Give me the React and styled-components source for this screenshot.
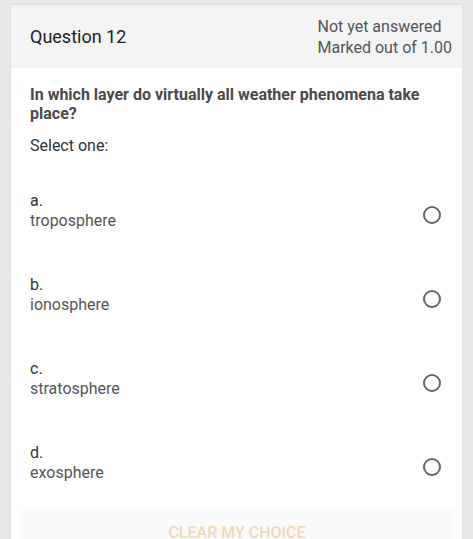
import React from 'react'
import { styled, createGlobalStyle } from 'styled-components'

const options = [
  { letter: 'a.', label: 'troposphere' },
  { letter: 'b.', label: 'ionosphere' },
  { letter: 'c.', label: 'stratosphere' },
  { letter: 'd.', label: 'exosphere' },
]

export default function App() {
  return (
    <>
      <GlobalStyle />
      <Card>
        <Header>
          <h1>Question 12</h1>
          <Status>
            <span>Not yet answered</span>
            <span>Marked out of 1.00</span>
          </Status>
        </Header>
        <Body>
          <QuestionText>
            In which layer do virtually all weather phenomena take place?
          </QuestionText>
          <Prompt>Select one:</Prompt>
          <Options>
            {options.map((o) => (
              <Option key={o.letter}>
                <OptionText>
                  <span className='letter'>{o.letter}</span>
                  <span>{o.label}</span>
                </OptionText>
                <Radio />
              </Option>
            ))}
          </Options>
          <ClearButton>Clear my choice</ClearButton>
        </Body>
      </Card>
    </>
  )
}

const GlobalStyle = createGlobalStyle`
  html, body {
    margin: 0;
    background: #e9e9e9;
    font-family: Roboto, "Liberation Sans", sans-serif;
    overflow: hidden;
  }
`;

const Card = styled.div`
  margin: 5px 0 0 11px;
  width: 451px;
  background: #fff;
  box-shadow: 0 0 2px rgba(0, 0, 0, 0.12);
`;

const Header = styled.div`
  display: flex;
  justify-content: space-between;
  align-items: center;
  height: 63px;
  padding: 0 10px 0 19px;
  background: #f4f4f4;

  h1 {
    margin: 0;
    font-size: 18px;
    font-weight: 400;
    color: #222;
  }
`;

const Status = styled.div`
  display: flex;
  flex-direction: column;
  font-size: 16px;
  line-height: 21px;
  color: #555;
`;

const Body = styled.div`
  padding: 17px 19px 40px 19px;
`;

const QuestionText = styled.p`
  margin: 0;
  font-size: 16px;
  font-weight: 700;
  line-height: 19px;
  color: #4a4a4a;
`;

const Prompt = styled.p`
  margin: 13px 0 0;
  font-size: 16px;
  line-height: 20px;
  color: #333;
`;

const Options = styled.div`
  display: flex;
  flex-direction: column;
  gap: 24px;
  margin-top: 25px;
`;

const Option = styled.div`
  display: flex;
  justify-content: space-between;
  align-items: center;
  padding: 10px 0;
`;

const OptionText = styled.div`
  display: flex;
  flex-direction: column;
  font-size: 16px;
  line-height: 20px;
  color: #555;

  .letter {
    color: #333;
  }
`;

const Radio = styled.span`
  box-sizing: border-box;
  width: 18px;
  height: 18px;
  margin: 8px 2px 0 0;
  border: 2px solid #666;
  border-radius: 50%;
`;

const ClearButton = styled.div`
  display: flex;
  justify-content: center;
  align-items: center;
  height: 44px;
  margin: 17px -9px 0 -8px;
  background: #fafafa;
  box-shadow: 0 0 2px rgba(0, 0, 0, 0.06);
  font-size: 16px;
  font-weight: 500;
  text-transform: uppercase;
  color: #f2d8b6;
`;
